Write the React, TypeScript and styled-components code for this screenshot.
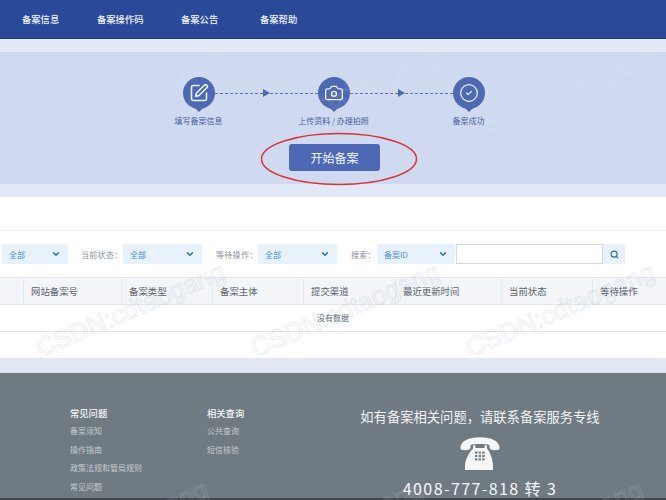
import React from 'react'
import styled, { createGlobalStyle } from 'styled-components'
import { Camera, ChevronDown, CircleCheck, Search, SquarePen } from 'lucide-react'

const GlobalStyle = createGlobalStyle`
  html, body {
    margin: 0;
    padding: 0;
    background: #fff;
  }
  body {
    font-family: "Noto Sans CJK SC", "Liberation Sans", sans-serif;
  }
  * {
    box-sizing: border-box;
  }
`

const Page = styled.div`
  position: relative;
  width: 666px;
  height: 500px;
  overflow: hidden;
  background: #e3e8f6;
`

const Nav = styled.nav`
  display: flex;
  align-items: center;
  height: 39px;
  padding-left: 22px;
  background: #2a4a99;
  border-bottom: 1px solid #203a80;
`
const NavItem = styled.a<{ $width: number }>`
  width: ${p => p.$width}px;
  font-size: 9.3px;
  font-weight: 500;
  color: #eef1f8;
`

const HeroBand = styled.div`
  padding: 13px 0;
`
const Hero = styled.section`
  position: relative;
  display: flex;
  flex-direction: column;
  align-items: center;
  height: 132px;
  padding: 25px 0 0 1px;
  background: #cfd9f0;
`
const Steps = styled.div`
  display: flex;
  align-items: flex-start;
`
const Step = styled.div`
  display: flex;
  flex-direction: column;
  align-items: center;
  width: 32px;
`
const Pin = styled.div`
  position: relative;
  display: flex;
  align-items: center;
  justify-content: center;
  width: 32px;
  height: 32px;
  border-radius: 50%;
  background: #4d69b3;
  color: #eef2fb;

  &::after {
    content: '';
    position: absolute;
    left: 9px;
    bottom: -3px;
    border-top: 7px solid #4d69b3;
    border-left: 7px solid transparent;
    border-right: 7px solid transparent;
  }
`
const StepLabel = styled.div`
  margin-top: 6px;
  font-size: 8px;
  line-height: 12px;
  white-space: nowrap;
  color: #46609f;
`
const Connector = styled.div`
  display: flex;
  align-items: center;
  width: 103px;
  height: 32px;
`
const DashLine = styled.span`
  flex: 1;
  border-top: 1px dashed #5c74b5;
`
const Arrow = styled.span`
  border-left: 7px solid #4d69b3;
  border-top: 4px solid transparent;
  border-bottom: 4px solid transparent;
`
const StartButton = styled.button`
  width: 91px;
  height: 27px;
  margin-top: 17px;
  margin-left: 2px;
  padding: 0;
  border: none;
  border-radius: 3px;
  background: #4d69b3;
  font-family: inherit;
  font-size: 12px;
  color: #f2f5fb;
`
const Circled = styled.svg`
  position: absolute;
  left: 259px;
  top: 79px;
`

const Panel = styled.section`
  height: 161px;
  background: #fff;
`
const PanelTop = styled.div`
  height: 34px;
  border-bottom: 1px solid #eceef1;
`
const FilterBar = styled.div`
  display: flex;
  align-items: center;
  height: 20px;
  margin: 13px 0;
  padding-left: 2px;
`
const FilterLabel = styled.span<{ $width: number; $gap?: number }>`
  width: ${p => p.$width}px;
  margin-left: ${p => p.$gap ?? 0}px;
  font-size: 8px;
  letter-spacing: 0.3px;
  white-space: nowrap;
  color: #8a9098;
`
const Select = styled.div<{ $width: number }>`
  display: flex;
  align-items: center;
  justify-content: space-between;
  width: ${p => p.$width}px;
  height: 20px;
  padding: 0 7px;
  border-radius: 2px;
  background: #e7f2fc;
  font-size: 8px;
  color: #4a8fd6;

  svg {
    color: #2c6cb3;
  }
`
const SearchInput = styled.input`
  width: 147px;
  height: 20px;
  margin-left: 1px;
  padding: 0 4px;
  border: 1px solid #d3d9de;
  background: #fff;
  outline: none;
`
const SearchButton = styled.button`
  display: flex;
  align-items: center;
  justify-content: center;
  width: 22px;
  height: 20px;
  padding: 0;
  border: none;
  background: #e7f2fc;
  color: #2c6cb3;
`

const columns = '23px 98px 91px 91px 92px 106px 91px 74px'
const TableHead = styled.div`
  display: grid;
  grid-template-columns: ${columns};
  height: 28px;
  background: #f3f5f9;
  border-top: 1px solid #e4e6ea;
  border-bottom: 1px solid #e4e6ea;
`
const HeadCell = styled.div`
  display: flex;
  align-items: center;
  padding-left: 7px;
  border-left: 1px solid #e8eaee;
  font-size: 9.4px;
  white-space: nowrap;
  color: #5c6269;

  &:first-child {
    border-left: none;
  }
`
const EmptyRow = styled.div`
  height: 27px;
  line-height: 26px;
  text-align: center;
  border-bottom: 1px solid #e2e4e8;
  font-size: 8px;
  color: #666c73;
`

const Footer = styled.footer`
  display: flex;
  height: 128px;
  margin-top: 14px;
  padding: 31px 0 0 70px;
  background: #6f7a83;
  border-top: 1px solid #d5dae3;
  border-bottom: 2px solid #3f474e;
`
const LinkColumn = styled.div<{ $width: number }>`
  width: ${p => p.$width}px;
`
const ColumnTitle = styled.div`
  font-size: 9.3px;
  font-weight: 500;
  line-height: 18px;
  color: #f4f5f6;
`
const FooterLink = styled.a`
  display: block;
  font-size: 8px;
  line-height: 18.6px;
  white-space: nowrap;
  color: #c6cbcf;
`
const Hotline = styled.div`
  display: flex;
  flex-direction: column;
  align-items: center;
  width: 240px;
  padding-top: 3px;
`
const HotlineTitle = styled.div`
  font-size: 13.3px;
  line-height: 20px;
  white-space: nowrap;
  color: #f2f3f4;
`
const PhoneIcon = styled.svg`
  margin-top: 10px;
`
const HotlineNumber = styled.div`
  margin-top: 8px;
  font-size: 16px;
  line-height: 20px;
  letter-spacing: 1.4px;
  white-space: nowrap;
  color: #f6f7f7;
`

const Watermark = styled.span<{ $x: number; $y: number; $tone: string }>`
  position: absolute;
  left: ${p => p.$x}px;
  top: ${p => p.$y}px;
  font-family: "Liberation Sans", sans-serif;
  font-size: 26px;
  line-height: 1;
  white-space: nowrap;
  pointer-events: none;
  color: transparent;
  -webkit-text-stroke: 1px ${p => p.$tone};
  transform: rotate(-23deg);
  transform-origin: left bottom;
`

const navItems = [
  { label: '备案信息', width: 75 },
  { label: '备案操作码', width: 84 },
  { label: '备案公告', width: 79 },
  { label: '备案帮助', width: 60 },
]
const headers = ['', '网站备案号', '备案类型', '备案主体', '提交渠道', '最近更新时间', '当前状态', '等待操作']
const heroTone = 'rgba(255, 255, 255, 0.12)'
const panelTone = 'rgba(150, 165, 190, 0.2)'
const footerTone = 'rgba(255, 255, 255, 0.14)'
const marks = [
  { x: 43, y: 119, tone: heroTone },
  { x: 258, y: 119, tone: heroTone },
  { x: 472, y: 119, tone: heroTone },
  { x: 42, y: 335, tone: panelTone },
  { x: 257, y: 335, tone: panelTone },
  { x: 472, y: 335, tone: panelTone },
  { x: 25, y: 553, tone: footerTone },
  { x: 240, y: 553, tone: footerTone },
  { x: 460, y: 553, tone: footerTone },
]

const Chevron = () => <ChevronDown size={10} strokeWidth={3.4} />

const StepConnector = () => (
  <Connector>
    <DashLine />
    <Arrow />
    <DashLine />
  </Connector>
)

const App = (): JSX.Element => (
  <Page>
    <GlobalStyle />
    <Nav>
      {navItems.map(item => (
        <NavItem key={item.label} $width={item.width}>{item.label}</NavItem>
      ))}
    </Nav>

    <HeroBand>
      <Hero>
        <Steps>
          <Step>
            <Pin><SquarePen size={20} strokeWidth={1.9} /></Pin>
            <StepLabel>填写备案信息</StepLabel>
          </Step>
          <StepConnector />
          <Step>
            <Pin><Camera size={20} strokeWidth={1.6} /></Pin>
            <StepLabel>上传资料 / 办理拍照</StepLabel>
          </Step>
          <StepConnector />
          <Step>
            <Pin><CircleCheck size={20} strokeWidth={1.5} /></Pin>
            <StepLabel>备案成功</StepLabel>
          </Step>
        </Steps>
        <StartButton>开始备案</StartButton>
        <Circled width="160" height="56" viewBox="0 0 160 56">
          <ellipse cx="80" cy="28" rx="77.5" ry="25.5" fill="none" stroke="#d9343c" strokeWidth="1.5" />
        </Circled>
      </Hero>
    </HeroBand>

    <Panel>
      <PanelTop />
      <FilterBar>
        <Select $width={66}>全部<Chevron /></Select>
        <FilterLabel $width={42} $gap={13}>当前状态：</FilterLabel>
        <Select $width={79}>全部<Chevron /></Select>
        <FilterLabel $width={42} $gap={14}>等待操作：</FilterLabel>
        <Select $width={79}>全部<Chevron /></Select>
        <FilterLabel $width={26} $gap={14}>搜索：</FilterLabel>
        <Select $width={78}>备案ID<Chevron /></Select>
        <SearchInput />
        <SearchButton><Search size={9} strokeWidth={3} /></SearchButton>
      </FilterBar>
      <TableHead>
        {headers.map(title => (
          <HeadCell key={title}>{title}</HeadCell>
        ))}
      </TableHead>
      <EmptyRow>没有数据</EmptyRow>
    </Panel>

    <Footer>
      <LinkColumn $width={137}>
        <ColumnTitle>常见问题</ColumnTitle>
        <FooterLink>备案须知</FooterLink>
        <FooterLink>操作指南</FooterLink>
        <FooterLink>政策法规和管局规则</FooterLink>
        <FooterLink>常见问题</FooterLink>
      </LinkColumn>
      <LinkColumn $width={153}>
        <ColumnTitle>相关查询</ColumnTitle>
        <FooterLink>公共查询</FooterLink>
        <FooterLink>短信核验</FooterLink>
      </LinkColumn>
      <Hotline>
        <HotlineTitle>如有备案相关问题，请联系备案服务专线</HotlineTitle>
        <PhoneIcon width="40" height="33" viewBox="0 0 40 33">
          <path
            fill="#f5f6f7"
            d="M0.5 11.5C0 6 5 2.5 11 1.2 17 0 23 0 29 1.2 35 2.5 40 6 39.5 11.5 39.3 13 36 13.5 33 13 31 12.7 29.5 12 29.5 10.5L29.5 8C26 6.8 14 6.8 10.5 8L10.5 10.5C10.5 12 9 12.7 7 13 4 13.5 0.7 13 0.5 11.5Z"
          />
          <path
            fill="#f5f6f7"
            d="M13 8.5H15.5V11H24.5V8.5H27V11.5C29 13.5 33 21 33 29V33H5V29C5 21 11 13.5 13 11.5Z"
          />
          <g fill="#6f7a83">
            {[0, 1, 2].flatMap(row =>
              [0, 1, 2].map(col => (
                <rect key={`${row}-${col}`} x={15 + col * 3.6} y={14.5 + row * 3.4} width="2.4" height="2.2" />
              ))
            )}
          </g>
        </PhoneIcon>
        <HotlineNumber>4008-777-818 转 3</HotlineNumber>
      </Hotline>
    </Footer>

    {marks.map(mark => (
      <Watermark key={`${mark.x}-${mark.y}`} $x={mark.x} $y={mark.y} $tone={mark.tone}>
        CSDN:cdtaogang
      </Watermark>
    ))}
  </Page>
)

export default App
